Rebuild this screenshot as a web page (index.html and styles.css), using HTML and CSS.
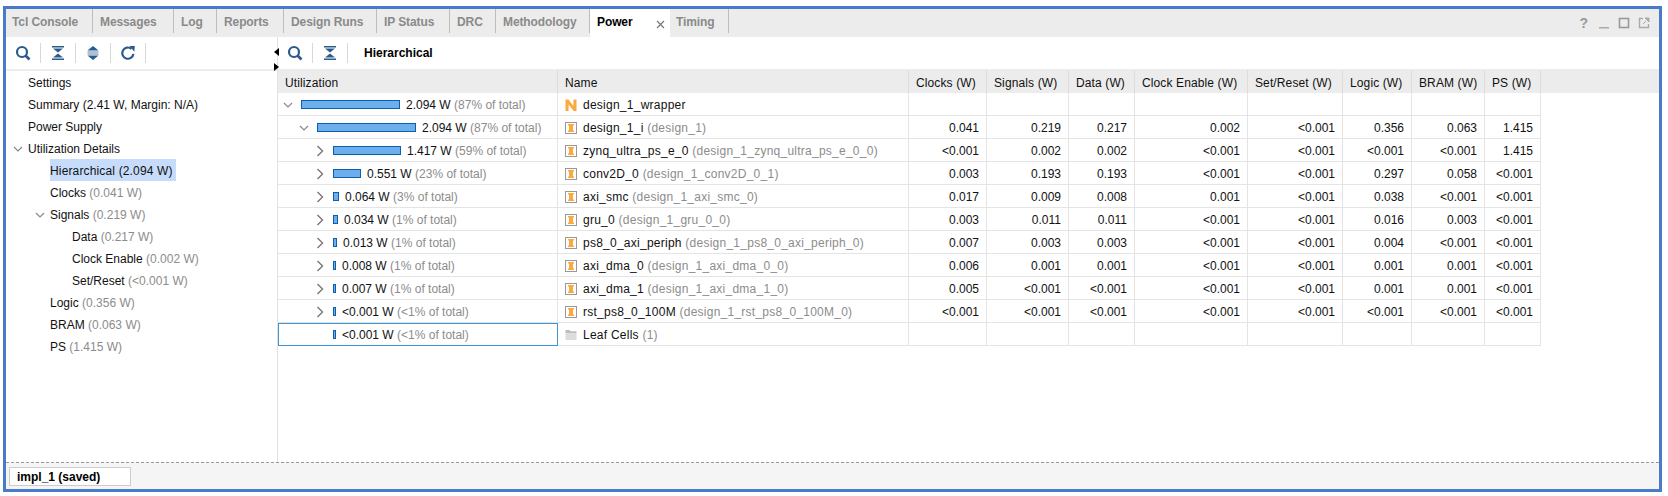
FILE: index.html
```html
<!DOCTYPE html>
<html lang="en">
<head>
  <meta charset="UTF-8">
  <title>Power</title>
  <link rel="stylesheet" href="styles.css">
</head>
<body>
  <svg class="defs" width="0" height="0">
    <symbol id="i-search" viewBox="0 0 16 16">
      <circle cx="7" cy="7" r="5" fill="none" stroke="#2c5a8c" stroke-width="2.2"/>
      <path d="M10.5 10.5 14.5 14.5" stroke="#2c5a8c" stroke-width="2.6"/>
    </symbol>
    <symbol id="i-collapse" viewBox="0 0 16 16">
      <path d="M2 1h12v1.4H2zM2 13.6h12V15H2z" fill="#2c5a8c"/>
      <path d="M3 3.4h10L8 7.6zM3 12.6h10L8 8.4z" fill="#2c5a8c"/>
    </symbol>
    <symbol id="i-expand" viewBox="0 0 16 16">
      <path d="M8 1 13.5 5.6h-11zM8 15 2.5 10.4h11z" fill="#2c5a8c"/>
      <path d="M2.5 6.6h11v1H2.5zM2.5 8.4h11v1H2.5z" fill="#5f86ab"/>
    </symbol>
    <symbol id="i-refresh" viewBox="0 0 16 16">
      <path d="M13.4 8.8A5.6 5.6 0 1 1 11.4 3.8" fill="none" stroke="#2c5a8c" stroke-width="2.2"/>
      <path d="M9.4 1 14.8 1 14.4 6.8z" fill="#2c5a8c"/>
    </symbol>
    <symbol id="i-down" viewBox="0 0 12 12">
      <path d="M2 4 6 8 10 4" fill="none" stroke="#888" stroke-width="1.2"/>
    </symbol>
    <symbol id="i-right" viewBox="0 0 12 12">
      <path d="M3.5 1 8.5 6 3.5 11" fill="none" stroke="#777" stroke-width="1.4"/>
    </symbol>
    <symbol id="i-inst" viewBox="0 0 12 12">
      <rect x="0.5" y="0.5" width="11" height="11" fill="#fff" stroke="#999"/>
      <path d="M3 2h6v1.5H8v5h1V10H3V8.5h1v-5H3z" fill="#fba83f"/>
    </symbol>
    <symbol id="i-top" viewBox="0 0 12 12">
      <path d="M0.5 12V.5h3L8.4 7V.5h3.1V12H8.6L3.6 5.4V12z" fill="#fba83f"/>
    </symbol>
    <symbol id="i-folder" viewBox="0 0 12 12">
      <path d="M.5 1h4l1 1.2h6v2.3H.5z" fill="#bdbdbd"/>
      <path d="M.5 5h11v6H.5z" fill="#dcdcdc"/>
    </symbol>
  </svg>

  <div class="frame">
    <div class="tabs">
      <div class="tab">Tcl Console</div>
      <div class="tab">Messages</div>
      <div class="tab">Log</div>
      <div class="tab">Reports</div>
      <div class="tab">Design Runs</div>
      <div class="tab">IP Status</div>
      <div class="tab">DRC</div>
      <div class="tab">Methodology</div>
      <div class="tab active">Power
        <svg class="tab-close" width="9" height="9" viewBox="0 0 9 9"><path d="M1 1 8 8M8 1 1 8" stroke="#777" stroke-width="1.2"/></svg>
      </div>
      <div class="tab after-active">Timing</div>
      <div class="win-icons">
        <span class="help">?</span>
        <svg width="12" height="12" viewBox="0 0 12 12"><path d="M1 10h10v1.5H1z" fill="#aaa"/></svg>
        <svg width="12" height="12" viewBox="0 0 12 12"><rect x="1.5" y="1.5" width="9" height="9" fill="none" stroke="#999" stroke-width="1.6"/></svg>
        <svg width="12" height="12" viewBox="0 0 12 12"><path d="M5 1.5H1.5v9h9V7" fill="none" stroke="#aaa" stroke-width="1.4"/><path d="M7 1h4v4zM5 7l3-3" fill="#aaa" stroke="#aaa"/></svg>
      </div>
    </div>

    <div class="main">
      <div class="left">
        <div class="toolbar">
          <span class="tool"><svg width="16" height="16"><use href="#i-search"/></svg></span>
          <span class="tool"><svg width="16" height="16"><use href="#i-collapse"/></svg></span>
          <span class="tool"><svg width="16" height="16"><use href="#i-expand"/></svg></span>
          <span class="tool"><svg width="16" height="16"><use href="#i-refresh"/></svg></span>
        </div>
        <ul class="tree">
          <li class="lvl0">Settings</li>
          <li class="lvl0">Summary (2.41 W, Margin: N/A)</li>
          <li class="lvl0">Power Supply</li>
          <li class="lvl0"><svg class="twist" width="12" height="12"><use href="#i-down"/></svg>Utilization Details</li>
          <li class="lvl1"><span class="selected">Hierarchical (2.094 W)</span></li>
          <li class="lvl1">Clocks <em>(0.041 W)</em></li>
          <li class="lvl1"><svg class="twist" width="12" height="12"><use href="#i-down"/></svg>Signals <em>(0.219 W)</em></li>
          <li class="lvl2">Data <em>(0.217 W)</em></li>
          <li class="lvl2">Clock Enable <em>(0.002 W)</em></li>
          <li class="lvl2">Set/Reset <em>(&lt;0.001 W)</em></li>
          <li class="lvl1">Logic <em>(0.356 W)</em></li>
          <li class="lvl1">BRAM <em>(0.063 W)</em></li>
          <li class="lvl1">PS <em>(1.415 W)</em></li>
        </ul>
      </div>

      <div class="right">
        <div class="toolbar">
          <span class="tool"><svg width="16" height="16"><use href="#i-search"/></svg></span>
          <span class="tool"><svg width="16" height="16"><use href="#i-collapse"/></svg></span>
          <b class="view-name">Hierarchical</b>
        </div>
        <table class="power">
          <colgroup>
            <col class="c-util"><col class="c-name"><col class="c-clocks"><col class="c-signals"><col class="c-data">
            <col class="c-enable"><col class="c-reset"><col class="c-logic"><col class="c-bram"><col class="c-ps"><col>
          </colgroup>
          <thead>
            <tr>
              <th>Utilization</th><th>Name</th><th>Clocks (W)</th><th>Signals (W)</th><th>Data (W)</th>
              <th>Clock Enable (W)</th><th>Set/Reset (W)</th><th>Logic (W)</th><th>BRAM (W)</th><th>PS (W)</th><th class="filler"></th>
            </tr>
          </thead>
          <tbody>
            <tr>
              <td class="util d0"><svg class="twist" width="12" height="12"><use href="#i-down"/></svg><span class="bar" style="width:99px"></span>2.094 W <em>(87% of total)</em></td>
              <td class="name"><svg class="ico" width="12" height="12"><use href="#i-top"/></svg>design_1_wrapper</td>
              <td></td><td></td><td></td><td></td><td></td><td></td><td></td><td></td>
            </tr>
            <tr>
              <td class="util d1"><svg class="twist" width="12" height="12"><use href="#i-down"/></svg><span class="bar" style="width:99px"></span>2.094 W <em>(87% of total)</em></td>
              <td class="name"><svg class="ico" width="12" height="12"><use href="#i-inst"/></svg>design_1_i <em>(design_1)</em></td>
              <td>0.041</td><td>0.219</td><td>0.217</td><td>0.002</td><td>&lt;0.001</td><td>0.356</td><td>0.063</td><td>1.415</td>
            </tr>
            <tr>
              <td class="util d2"><svg class="twist" width="12" height="12"><use href="#i-right"/></svg><span class="bar" style="width:68px"></span>1.417 W <em>(59% of total)</em></td>
              <td class="name"><svg class="ico" width="12" height="12"><use href="#i-inst"/></svg>zynq_ultra_ps_e_0 <em>(design_1_zynq_ultra_ps_e_0_0)</em></td>
              <td>&lt;0.001</td><td>0.002</td><td>0.002</td><td>&lt;0.001</td><td>&lt;0.001</td><td>&lt;0.001</td><td>&lt;0.001</td><td>1.415</td>
            </tr>
            <tr>
              <td class="util d2"><svg class="twist" width="12" height="12"><use href="#i-right"/></svg><span class="bar" style="width:28px"></span>0.551 W <em>(23% of total)</em></td>
              <td class="name"><svg class="ico" width="12" height="12"><use href="#i-inst"/></svg>conv2D_0 <em>(design_1_conv2D_0_1)</em></td>
              <td>0.003</td><td>0.193</td><td>0.193</td><td>&lt;0.001</td><td>&lt;0.001</td><td>0.297</td><td>0.058</td><td>&lt;0.001</td>
            </tr>
            <tr>
              <td class="util d2"><svg class="twist" width="12" height="12"><use href="#i-right"/></svg><span class="bar" style="width:6px"></span>0.064 W <em>(3% of total)</em></td>
              <td class="name"><svg class="ico" width="12" height="12"><use href="#i-inst"/></svg>axi_smc <em>(design_1_axi_smc_0)</em></td>
              <td>0.017</td><td>0.009</td><td>0.008</td><td>0.001</td><td>&lt;0.001</td><td>0.038</td><td>&lt;0.001</td><td>&lt;0.001</td>
            </tr>
            <tr>
              <td class="util d2"><svg class="twist" width="12" height="12"><use href="#i-right"/></svg><span class="bar" style="width:5px"></span>0.034 W <em>(1% of total)</em></td>
              <td class="name"><svg class="ico" width="12" height="12"><use href="#i-inst"/></svg>gru_0 <em>(design_1_gru_0_0)</em></td>
              <td>0.003</td><td>0.011</td><td>0.011</td><td>&lt;0.001</td><td>&lt;0.001</td><td>0.016</td><td>0.003</td><td>&lt;0.001</td>
            </tr>
            <tr>
              <td class="util d2"><svg class="twist" width="12" height="12"><use href="#i-right"/></svg><span class="bar" style="width:4px"></span>0.013 W <em>(1% of total)</em></td>
              <td class="name"><svg class="ico" width="12" height="12"><use href="#i-inst"/></svg>ps8_0_axi_periph <em>(design_1_ps8_0_axi_periph_0)</em></td>
              <td>0.007</td><td>0.003</td><td>0.003</td><td>&lt;0.001</td><td>&lt;0.001</td><td>0.004</td><td>&lt;0.001</td><td>&lt;0.001</td>
            </tr>
            <tr>
              <td class="util d2"><svg class="twist" width="12" height="12"><use href="#i-right"/></svg><span class="bar" style="width:3px"></span>0.008 W <em>(1% of total)</em></td>
              <td class="name"><svg class="ico" width="12" height="12"><use href="#i-inst"/></svg>axi_dma_0 <em>(design_1_axi_dma_0_0)</em></td>
              <td>0.006</td><td>0.001</td><td>0.001</td><td>&lt;0.001</td><td>&lt;0.001</td><td>0.001</td><td>0.001</td><td>&lt;0.001</td>
            </tr>
            <tr>
              <td class="util d2"><svg class="twist" width="12" height="12"><use href="#i-right"/></svg><span class="bar" style="width:3px"></span>0.007 W <em>(1% of total)</em></td>
              <td class="name"><svg class="ico" width="12" height="12"><use href="#i-inst"/></svg>axi_dma_1 <em>(design_1_axi_dma_1_0)</em></td>
              <td>0.005</td><td>&lt;0.001</td><td>&lt;0.001</td><td>&lt;0.001</td><td>&lt;0.001</td><td>0.001</td><td>0.001</td><td>&lt;0.001</td>
            </tr>
            <tr>
              <td class="util d2"><svg class="twist" width="12" height="12"><use href="#i-right"/></svg><span class="bar" style="width:3px"></span>&lt;0.001 W <em>(&lt;1% of total)</em></td>
              <td class="name"><svg class="ico" width="12" height="12"><use href="#i-inst"/></svg>rst_ps8_0_100M <em>(design_1_rst_ps8_0_100M_0)</em></td>
              <td>&lt;0.001</td><td>&lt;0.001</td><td>&lt;0.001</td><td>&lt;0.001</td><td>&lt;0.001</td><td>&lt;0.001</td><td>&lt;0.001</td><td>&lt;0.001</td>
            </tr>
            <tr>
              <td class="util d2 focused"><span class="twist-gap"></span><span class="bar" style="width:3px"></span>&lt;0.001 W <em>(&lt;1% of total)</em></td>
              <td class="name"><svg class="ico" width="12" height="12"><use href="#i-folder"/></svg>Leaf Cells <em>(1)</em></td>
              <td></td><td></td><td></td><td></td><td></td><td></td><td></td><td></td>
            </tr>
          </tbody>
        </table>
      </div>

      <svg class="split-arrows" width="6" height="24" viewBox="0 0 6 24">
        <path d="M5 1v8L0 5zM0 16v8l5-4z" fill="#000"/>
      </svg>
    </div>

    <div class="bottom">
      <div class="run-tab">impl_1 (saved)</div>
    </div>
  </div>
</body>
</html>
```

FILE: styles.css
```css
* {
  box-sizing: border-box;
}
body {
  margin: 0;
  background-color: #fff;
  font-family: "Liberation Sans", Arial, sans-serif;
  font-size: 12px;
  color: #111;
}
.defs {
  position: absolute;
}
em {
  font-style: normal;
  color: #8c8c8c;
}

.frame {
  display: flex;
  flex-direction: column;
  width: 1659px;
  height: 486px;
  margin: 6px 0 0 3px;
  border: 3px solid #4a7bcb;
}

/* top tab strip */
.tabs {
  display: grid;
  grid-template-columns: 87px 81px 43px 67px 93px 73px 46px 94px 80px 59px 1fr;
  align-items: start;
  height: 28px;
  flex: none;
  background-color: #ececec;
}
.tab {
  height: 24px;
  padding: 6px 0 0 7px;
  border-right: 1px solid #bdbdbd;
  font-weight: bold;
  letter-spacing: -0.1px;
  color: #8a8a8a;
  white-space: nowrap;
}
.tab:first-child {
  padding-left: 6px;
}
.tab.active {
  display: flex;
  gap: 23px;
  height: 28px;
  border-right: none;
  background-color: #fff;
  color: #000;
}
.tab-close {
  flex: none;
  margin-top: 5px;
}
.tab.after-active {
  padding-left: 6px;
}
.win-icons {
  display: flex;
  justify-content: flex-end;
  align-items: center;
  gap: 8px;
  padding: 8px 9px 0 0;
}
.help {
  font-weight: bold;
  font-size: 14px;
  line-height: 12px;
  color: #999;
  margin-right: 2px;
}

.main {
  position: relative;
  display: flex;
  flex: 1;
  min-height: 0;
}
.left {
  width: 272px;
  flex: none;
  border-right: 1px solid #e2e2e2;
}
.right {
  flex: 1;
  min-width: 0;
}

.toolbar {
  display: flex;
  align-items: center;
  height: 32px;
}
.tool {
  display: flex;
  align-items: center;
  justify-content: center;
  width: 35px;
  height: 20px;
  padding-right: 1px;
  border-right: 1px solid #d8d8d8;
}
.view-name {
  margin-left: 16px;
  color: #000;
}
.split-arrows {
  position: absolute;
  left: 268px;
  top: 10px;
}

/* left tree */
.tree {
  list-style: none;
  margin: 0;
  padding: 0;
  border-top: 2px solid #ececec;
}
.tree li {
  position: relative;
  height: 22px;
  line-height: 24px;
  white-space: nowrap;
}
.tree .twist {
  position: absolute;
  top: 6px;
  margin-left: -16px;
}
.lvl0 {
  padding-left: 22px;
}
.lvl1 {
  padding-left: 44px;
}
.lvl2 {
  padding-left: 66px;
}
.selected {
  display: inline-block;
  height: 22px;
  padding-right: 3px;
  letter-spacing: 0.15px;
  background-color: #c6dcfa;
}

/* power table */
.power {
  width: 1381px;
  table-layout: fixed;
  border-collapse: separate;
  border-spacing: 0;
}
.c-util { width: 280px; }
.c-name { width: 351px; }
.c-clocks { width: 78px; }
.c-signals { width: 82px; }
.c-data { width: 66px; }
.c-enable { width: 113px; }
.c-reset { width: 95px; }
.c-logic { width: 69px; }
.c-bram { width: 73px; }
.c-ps { width: 56px; }
.power th {
  height: 24px;
  padding: 2px 0 0 7px;
  border-top: 2px solid #ececec;
  border-right: 1px solid #dcdcdc;
  background-color: #ececec;
  font-weight: normal;
  letter-spacing: 0.12px;
  text-align: left;
  white-space: nowrap;
}
.power th.filler {
  border-right: none;
}
.power td {
  height: 23px;
  padding: 2px 7px 0 0;
  border-right: 1px solid #e4e4e4;
  border-bottom: 1px solid #e4e4e4;
  text-align: right;
  white-space: nowrap;
}
.power td.util,
.power td.name {
  text-align: left;
}
.power td.name {
  padding-left: 7px;
  letter-spacing: 0.25px;
}
.util .twist {
  margin-right: 7px;
  vertical-align: -2px;
}
.twist-gap {
  display: inline-block;
  width: 19px;
}
.d0 {
  padding-left: 4px !important;
}
.d1 {
  padding-left: 20px !important;
}
.d2 {
  padding-left: 36px !important;
}
.bar {
  display: inline-block;
  height: 9px;
  margin-right: 6px;
  border: 1px solid #0d5fa8;
  background-color: #6caeee;
}
.ico {
  margin-right: 6px;
  vertical-align: -2px;
}
.focused {
  outline: 1px solid #3d94d6;
  outline-offset: -1px;
}

/* bottom run tab */
.bottom {
  flex: none;
  height: 27px;
  padding: 4px 0 0 3px;
  border-top: 1px dashed #999;
  background-color: #f5f5f5;
}
.run-tab {
  width: 122px;
  height: 19px;
  padding: 2px 0 0 7px;
  border: 1px solid #ccc;
  background-color: #fff;
  font-weight: bold;
  color: #000;
}
```
